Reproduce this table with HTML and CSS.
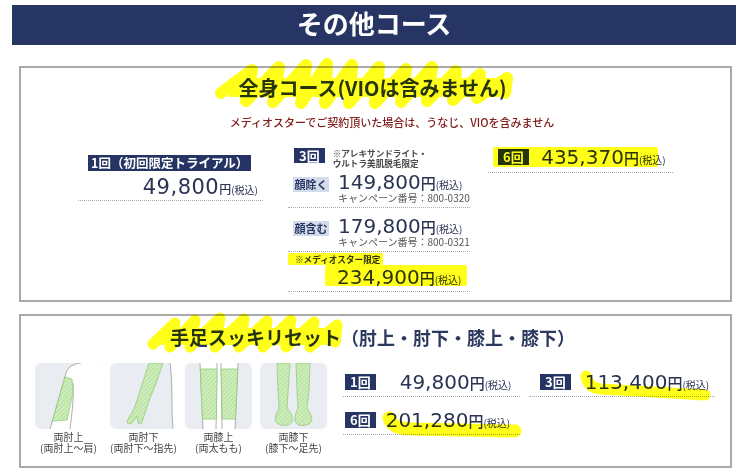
FILE: index.html
```html
<!DOCTYPE html>
<html lang="ja">
<head>
<meta charset="utf-8">
<title>その他コース</title>
<link rel="stylesheet" href="styles.css">
</head>
<body>
<div class="page">
  <h1 class="hero">その他コース</h1>

  <section class="card card-full">
    <h2 class="ttl"><span class="ttl-txt">全身コース(VIOは含みません)<svg class="scribble s1" viewBox="0 0 305 46" width="305" height="46"><rect x="14" y="17" width="272" height="19" fill="#ffff1a"/><path d="M6,32 L37,9 L31,40 L64,6 L58,41 L91,4 L86,42 L112,3 L110,42 L137,4 L134,42 L164,6 L160,42 L191,8 L186,41 L217,6 L212,40 L241,10 L238,39 L265,13 L262,37 L292,17 L290,32" fill="none" stroke="#ffff1a" stroke-width="12" stroke-linejoin="round" stroke-linecap="round"/></svg></span></h2>
    <p class="lead">メディオスターでご契約頂いた場合は、うなじ、VIOを含みません</p>

    <div class="plans">
      <div class="plan p1">
        <div class="badge badge-wide">1回（初回限定トライアル）</div>
        <div class="price">49,800<span class="yen">円</span><span class="tax">(税込)</span></div>
      </div>

      <div class="plan p3">
        <div class="p3-head">
          <span class="badge">3回</span>
          <span class="fine">※アレキサンドライト・<br>ウルトラ美肌脱毛限定</span>
        </div>
        <div class="opt opt1">
          <span class="sub-badge">顔除く</span>
          <div class="opt-body">
            <div class="price">149,800<span class="yen">円</span><span class="tax">(税込)</span></div>
            <div class="camp">キャンペーン番号：800-0320</div>
          </div>
        </div>
        <div class="opt opt2">
          <span class="sub-badge">顔含む</span>
          <div class="opt-body">
            <div class="price">179,800<span class="yen">円</span><span class="tax">(税込)</span></div>
            <div class="camp">キャンペーン番号：800-0321</div>
          </div>
        </div>
        <div class="medi">
          <div class="medi-note">※メディオスター限定</div>
          <div class="price">234,900<span class="yen">円</span><span class="tax">(税込)</span></div>
          <span class="hl hl-a"></span>
          <span class="hl hl-b"></span>
        </div>
      </div>

      <div class="plan p6">
        <div class="p6-row">
          <span class="badge">6回</span>
          <div class="price">435,370<span class="yen">円</span><span class="tax">(税込)</span></div>
          <span class="hl hl-c"></span>
        </div>
      </div>
    </div>
  </section>

  <section class="card card-limbs">
    <h2 class="ttl2"><span class="ttl-txt main">手足スッキリセット<svg class="scribble s2" viewBox="0 0 200 38" width="200" height="38"><rect x="14" y="14" width="172" height="17" fill="#ffff1a"/><path d="M6,30 L28,9 L23,33 L48,6 L43,33 L73,4 L68,33 L97,5 L92,33 L120,7 L116,33 L144,6 L139,33 L167,8 L163,33 L190,11 L188,28" fill="none" stroke="#ffff1a" stroke-width="11" stroke-linejoin="round" stroke-linecap="round"/></svg></span><span class="paren">（肘上・肘下・膝上・膝下）</span></h2>

    <div class="limbs">
      <div class="legs">
        <div class="leg">
          <div class="leg-pic">
            <svg viewBox="0 0 67 66" width="67" height="66">
              <defs><pattern id="g1" width="3" height="3" patternUnits="userSpaceOnUse" patternTransform="rotate(45)"><rect width="3" height="3" fill="#bde6a6"/><rect width="1" height="3" fill="#d8f1ca"/></pattern></defs>
              <path d="M15,66 L31,10 C33,4 38,1 46,0 L67,0 L67,66 Z" fill="#fff"/>
              <path d="M15,66 L31,10 C33,4 38,1 46,0" fill="none" stroke="#9a9a9a" stroke-width="0.8"/>
              <path d="M38,20 C39,35 37,50 35,66" fill="none" stroke="#9a9a9a" stroke-width="0.8"/>
              <path d="M30,14 L37,16 L38,30 L32,57 L17.5,58 Z" fill="url(#g1)" stroke="#93cc7c" stroke-width="0.8"/>
            </svg>
          </div>
          <div class="leg-label">両肘上<br>(両肘上〜肩)</div>
        </div>
        <div class="leg">
          <div class="leg-pic">
            <svg viewBox="0 0 67 66" width="67" height="66">
              <defs><pattern id="g2" width="3" height="3" patternUnits="userSpaceOnUse" patternTransform="rotate(45)"><rect width="3" height="3" fill="#bde6a6"/><rect width="1" height="3" fill="#d8f1ca"/></pattern></defs>
              <path d="M60,0 C63,20 61,42 63,66 L67,66 L67,0 Z" fill="#fff"/>
              <path d="M60,0 C63,20 61,42 63,66" fill="none" stroke="#9a9a9a" stroke-width="0.8"/>
              <path d="M39,0 L53,0 L46,20 L39,38 L36,47 L33,56 L31,61 L28,60 L27,53 L22,60 L18,61 L17,58 L24,46 L28,34 Z" fill="url(#g2)" stroke="#93cc7c" stroke-width="0.8"/>
            </svg>
          </div>
          <div class="leg-label">両肘下<br>(両肘下〜指先)</div>
        </div>
        <div class="leg">
          <div class="leg-pic">
            <svg viewBox="0 0 67 66" width="67" height="66">
              <defs><pattern id="g3" width="3" height="3" patternUnits="userSpaceOnUse" patternTransform="rotate(45)"><rect width="3" height="3" fill="#bde6a6"/><rect width="1" height="3" fill="#d8f1ca"/></pattern></defs>
              <path d="M15,0 L53,0 L50,66 L18,66 Z" fill="#fff"/>
              <path d="M15,0 L18,66 M32,0 L31,66 M36,0 L37,66 M53,0 L50,66" fill="none" stroke="#9a9a9a" stroke-width="0.8"/>
              <path d="M15.3,6 L32,6 L31.5,56 L17.5,56 Z" fill="url(#g3)" stroke="#93cc7c" stroke-width="0.8"/>
              <path d="M36,6 L52.7,6 L50.5,56 L37.3,56 Z" fill="url(#g3)" stroke="#93cc7c" stroke-width="0.8"/>
            </svg>
          </div>
          <div class="leg-label">両膝上<br>(両太もも)</div>
        </div>
        <div class="leg">
          <div class="leg-pic">
            <svg viewBox="0 0 67 66" width="67" height="66">
              <defs><pattern id="g4" width="3" height="3" patternUnits="userSpaceOnUse" patternTransform="rotate(45)"><rect width="3" height="3" fill="#bde6a6"/><rect width="1" height="3" fill="#d8f1ca"/></pattern></defs>
              <path d="M17,0 L30,0 L28,30 L27,45 C30,48 33,53 32,58 C31,62 26,63 21,62 C16,61 14,57 16,52 C17,49 19,47 19,44 L18,28 Z" fill="url(#g4)" stroke="#93cc7c" stroke-width="0.8"/>
              <path d="M36,0 L50,0 L49,28 L47,44 C47,47 50,49 51,52 C53,57 51,61 46,62 C41,63 36,62 35,58 C34,53 37,48 38,45 L37,28 Z" fill="url(#g4)" stroke="#93cc7c" stroke-width="0.8"/>
            </svg>
          </div>
          <div class="leg-label">両膝下<br>(膝下〜足先)</div>
        </div>
      </div>

      <div class="limb-prices">
        <div class="lp lp-a">
          <span class="badge">1回</span>
          <div class="price">49,800<span class="yen">円</span><span class="tax">(税込)</span></div>
        </div>
        <div class="lp lp-b">
          <span class="badge">3回</span>
          <div class="price">113,400<span class="yen">円</span><span class="tax">(税込)</span></div>
          <svg class="scribble s3" viewBox="0 0 186 32" width="186" height="32"><path d="M57,4 Q59,16 72,17 L176,23" fill="none" stroke="#ffff1a" stroke-width="11" stroke-linecap="round" stroke-linejoin="round"/></svg>
        </div>
        <div class="lp lp-c">
          <span class="badge">6回</span>
          <div class="price">201,280<span class="yen">円</span><span class="tax">(税込)</span></div>
          <svg class="scribble s4" viewBox="0 0 177 32" width="177" height="32"><path d="M46,8 Q49,19 68,19 L172,21" fill="none" stroke="#ffff1a" stroke-width="13" stroke-linecap="round" stroke-linejoin="round"/></svg>
        </div>
      </div>
    </div>
  </section>
</div>
</body>
</html>
```

FILE: styles.css
```css
* {
  box-sizing: border-box;
  margin: 0;
  padding: 0;
}

body {
  margin: 0;
  background: #fff;
  font-family: "Noto Sans CJK JP", "Noto Sans", sans-serif;
  color: #253463;
}

.page {
  padding: 5px 14px 0 12px;
}

.hero {
  height: 40px;
  background: #263564;
  color: #fff;
  text-align: center;
  font-size: 26px;
  font-weight: 700;
  line-height: 36px;
}

.card {
  border: 2px solid #a9a9a9;
  margin: 0 4px 0 7px;
  background: #fff;
}

.card-full {
  margin-top: 21px;
  padding: 6px 0 8px;
}

.ttl {
  text-align: center;
  font-size: 20px;
  font-weight: 700;
  line-height: 28px;
  padding-right: 6px;
  color: #253463;
}

.ttl-txt {
  position: relative;
  display: inline-block;
}

.scribble {
  position: absolute;
  mix-blend-mode: multiply;
  pointer-events: none;
  overflow: visible;
}

.s1 {
  left: -24px;
  top: -13px;
}

.lead {
  text-align: center;
  font-size: 11px;
  line-height: 16px;
  margin-top: 12px;
  padding-left: 33px;
  color: #80201c;
  font-weight: 500;
}

.plans {
  display: flex;
  justify-content: center;
  margin-top: 16.5px;
}

.p1 {
  width: 185px;
  padding-top: 2px;
}

.p3 {
  width: 182px;
  margin-left: 25px;
  padding-top: 1px;
}

.p6 {
  width: 185px;
  margin-left: 18px;
}

.badge {
  display: inline-block;
  background: #253463;
  color: #fff;
  font-weight: 700;
  font-size: 13px;
  line-height: 16px;
  height: 16px;
  padding: 0 5px;
  white-space: nowrap;
}

.badge-wide {
  font-size: 12.5px;
  padding: 0 3px;
  margin-left: 10px;
}

.price {
  font-family: "DejaVu Sans", sans-serif;
  font-size: 20px;
  line-height: 20px;
  color: #2b3353;
  white-space: nowrap;
}

.yen {
  font-family: "Noto Sans CJK JP", sans-serif;
  font-size: 15px;
  line-height: 1;
  font-weight: 500;
  letter-spacing: 0;
}

.tax {
  font-family: "Noto Sans CJK JP", sans-serif;
  font-size: 10px;
  line-height: 1;
  letter-spacing: 0;
}

.p1 .price {
  font-size: 21px;
  line-height: 24px;
  letter-spacing: 0.5px;
  text-align: right;
  padding-right: 5px;
  margin-top: 2px;
  padding-bottom: 1px;
  border-bottom: 1px dotted #aaa;
}

.p1 .yen {
  font-size: 12px;
}

/* 3回 column */
.p3-head {
  display: flex;
  align-items: flex-start;
}

.p3-head .badge {
  margin-left: 6px;
  height: 15px;
  line-height: 15px;
}

.fine {
  margin-left: 8px;
  font-size: 8.6px;
  line-height: 10px;
  font-weight: 700;
  color: #4a4a4a;
}

.opt {
  display: flex;
  align-items: flex-start;
  border-bottom: 1px dotted #aaa;
  padding-bottom: 3px;
}

.opt1 {
  margin-top: 4.7px;
}

.opt2 {
  margin-top: 8px;
}

.sub-badge {
  margin-left: 5px;
  margin-top: 5px;
  width: 36px;
  height: 15px;
  line-height: 15px;
  background: #d4dcea;
  color: #253463;
  font-weight: 700;
  font-size: 11px;
  text-align: center;
}

.opt-body {
  margin-left: 9px;
}

.camp {
  font-size: 10px;
  line-height: 12px;
  color: #555;
}

.medi {
  position: relative;
  margin-top: 1px;
  border-bottom: 1px dotted #aaa;
  padding-bottom: 4px;
}

.medi-note {
  font-size: 8.6px;
  line-height: 12px;
  font-weight: 700;
  color: #333;
  padding-left: 7px;
}

.medi .price {
  margin-top: 2px;
  padding-left: 49px;
}

.hl {
  position: absolute;
  background: #ffff1a;
  mix-blend-mode: multiply;
  border-radius: 2px;
}

.hl-a {
  left: 0;
  top: 0;
  width: 95px;
  height: 12px;
}

.hl-b {
  left: 37px;
  top: 12px;
  width: 142px;
  height: 21px;
}

/* 6回 column */
.p6-row {
  position: relative;
  display: flex;
  align-items: center;
  border-bottom: 1px dotted #aaa;
  padding-bottom: 5px;
}

.p6-row .badge {
  margin-left: 10px;
}

.p6-row .price {
  margin-left: 12.5px;
}

.hl-c {
  left: 5px;
  top: 0;
  width: 165px;
  height: 20px;
}

/* 手足 card */
.card-limbs {
  margin-top: 12px;
  padding: 6px 0 13px 14px;
}

.ttl2 {
  text-align: center;
  font-weight: 700;
  line-height: 26px;
  padding-right: 20px;
  color: #253463;
}

.ttl2 .main {
  font-size: 19px;
}

.ttl2 .paren {
  font-size: 18px;
  color: #2d3a60;
}

.s2 {
  left: -23px;
  top: -10px;
}

.limbs {
  display: flex;
  margin-top: 13px;
}

.legs {
  display: flex;
  gap: 8px;
}

.leg {
  width: 67px;
  display: flex;
  flex-direction: column;
  align-items: center;
}

.leg-pic {
  width: 67px;
  height: 66px;
  border-radius: 6px;
  overflow: hidden;
  background: #e9ecf0;
}

.leg-pic svg {
  display: block;
}

.leg-label {
  margin-top: 2px;
  font-size: 10px;
  line-height: 11px;
  color: #444;
  text-align: center;
  white-space: nowrap;
}

.limb-prices {
  margin-left: 16px;
  padding-top: 8.7px;
  display: grid;
  grid-template-columns: 177px 186px;
  column-gap: 9px;
  row-gap: 13px;
  align-content: start;
}

.lp {
  position: relative;
  display: flex;
  align-items: center;
  border-bottom: 1px dotted #aaa;
  padding-bottom: 4px;
}

.lp-a .badge,
.lp-c .badge {
  margin-left: 2px;
}

.lp-a .price {
  margin-left: 24px;
}

.lp-b .badge {
  margin-left: 11px;
}

.lp-b .price {
  margin-left: 14px;
}

.lp-c .price {
  margin-left: 10px;
}

.s3,
.s4 {
  left: 0;
  top: 0;
}
```
